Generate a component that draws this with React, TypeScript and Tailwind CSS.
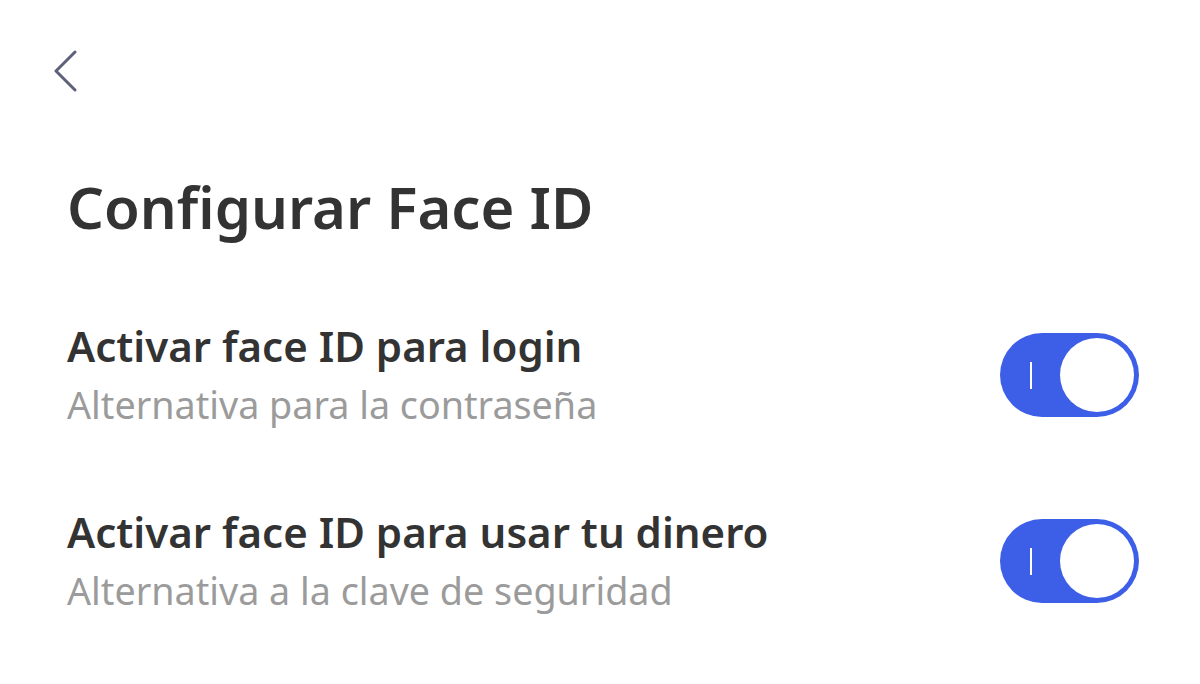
import React from "react";

interface ToggleRowProps {
  title: string;
  subtitle: string;
  on: boolean;
}

const Toggle: React.FC<{ on: boolean }> = ({ on }) => (
  <div
    className={`relative w-[139px] h-[84px] rounded-full shrink-0 ${
      on ? "bg-[#3d5fe8]" : "bg-gray-300"
    }`}
  >
    <span className="absolute left-[30px] top-[29px] w-[2px] h-[27px] bg-white" />
    <span className="absolute right-[5px] top-[5px] w-[74px] h-[74px] rounded-full bg-white" />
  </div>
);

const ToggleRow: React.FC<ToggleRowProps> = ({ title, subtitle, on }) => (
  <div className="flex items-center justify-between">
    <div className="flex flex-col">
      <span className="text-[42px] leading-[52px] font-semibold text-[#333333]">
        {title}
      </span>
      <span className="text-[37.7px] leading-[48px] text-[#9b9b9b] mt-[9px]">
        {subtitle}
      </span>
    </div>
    <Toggle on={on} />
  </div>
);

export default function App() {
  return (
    <div
      className="w-[1200px] h-[684px] bg-white overflow-hidden pl-[67px] pr-[61px]"
      style={{ fontFamily: '"Noto Sans", "Open Sans", sans-serif' }}
    >
      <div className="pt-[50px] -ml-[16px]">
        <svg width="30" height="42" viewBox="0 0 30 42" fill="none">
          <path
            d="M24 2 L5 21 L24 40"
            stroke="#5d6079"
            strokeWidth="3"
            strokeLinecap="round"
            strokeLinejoin="round"
          />
        </svg>
      </div>
      <h1 className="mt-[79px] text-[58px] leading-[72px] font-semibold text-[#333333]">
        Configurar Face ID
      </h1>
      <div className="mt-[77px] flex flex-col gap-[77px]">
        <ToggleRow
          title="Activar face ID para login"
          subtitle="Alternativa para la contraseña"
          on
        />
        <ToggleRow
          title="Activar face ID para usar tu dinero"
          subtitle="Alternativa a la clave de seguridad"
          on
        />
      </div>
    </div>
  );
}
